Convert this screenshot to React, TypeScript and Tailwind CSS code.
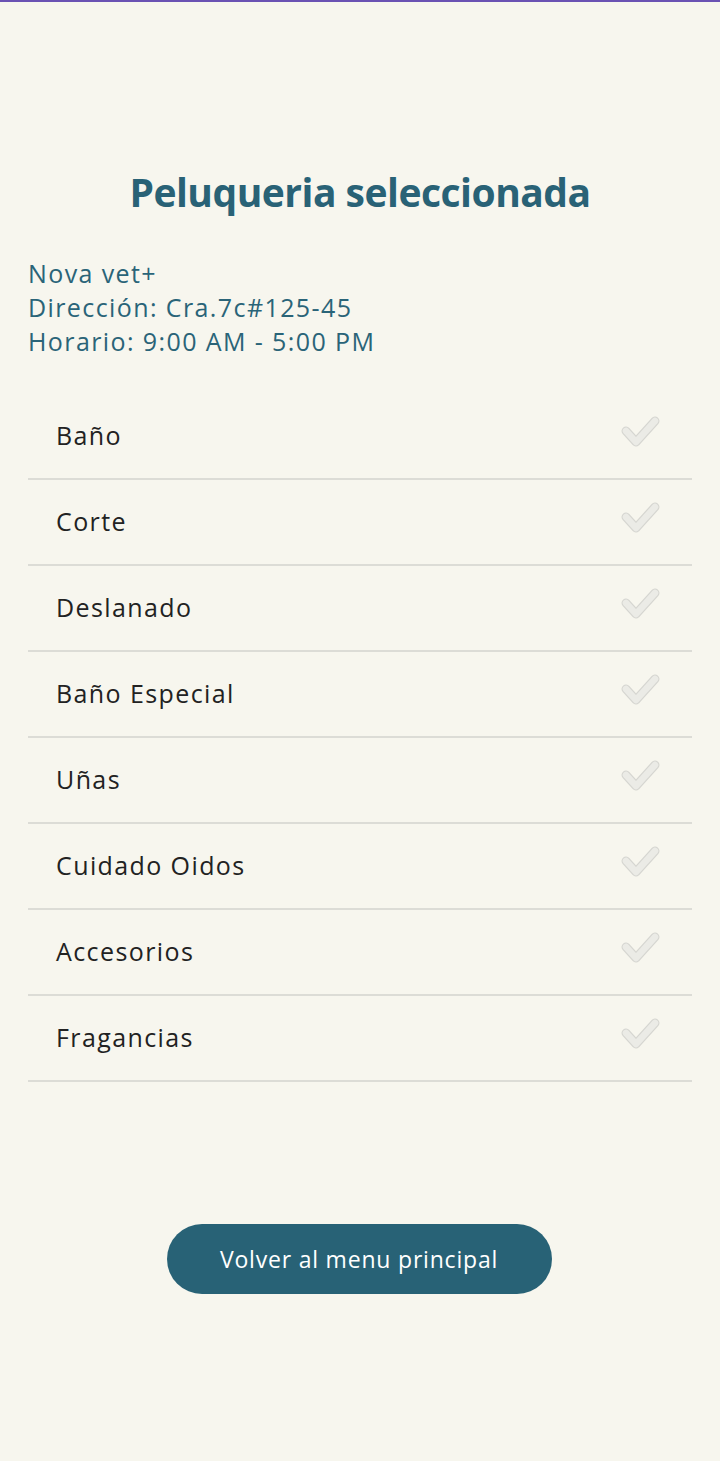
const services = [
  "Baño",
  "Corte",
  "Deslanado",
  "Baño Especial",
  "Uñas",
  "Cuidado Oidos",
  "Accesorios",
  "Fragancias",
];

function CheckIcon() {
  return (
    <svg width="44" height="40" viewBox="0 0 44 40" fill="none">
      <polyline
        points="6,15 16,26 35,5"
        stroke="#d6d6d1"
        strokeWidth="9"
        strokeLinecap="round"
        strokeLinejoin="round"
      />
      <polyline
        points="6,15 16,26 35,5"
        stroke="#ebebe6"
        strokeWidth="6.5"
        strokeLinecap="round"
        strokeLinejoin="round"
      />
    </svg>
  );
}

export default function App() {
  return (
    <div
      className="min-h-[1461px] bg-[#f7f6ee] border-t-[2px] border-[#6a52b3] flex flex-col"
      style={{ fontFamily: '"Open Sans", "Liberation Sans", sans-serif' }}
    >
      <main className="px-7 pt-[166px] flex flex-col">
        {/* Title */}
        <h1 className="text-center text-[39px] leading-[48px] font-bold text-[#296276] tracking-[-0.5px]">
          Peluqueria seleccionada
        </h1>

        {/* Info */}
        <div className="mt-[40px] text-[25px] leading-[34px] text-[#2a6478] tracking-[1.4px]">
          <p>Nova vet+</p>
          <p>Dirección: Cra.7c#125-45</p>
          <p>Horario: 9:00 AM - 5:00 PM</p>
        </div>

        {/* Services */}
        <ul className="mt-[36px]">
          {services.map((s) => (
            <li
              key={s}
              className="h-[86px] flex items-center justify-between pl-7 pr-[28px] border-b-2 border-[#dcdcd6]"
            >
              <span className="text-[25px] text-[#222222] tracking-[1.4px]">{s}</span>
              <CheckIcon />
            </li>
          ))}
        </ul>

        {/* Back button */}
        <div className="flex justify-center mt-[142px]">
          <button className="w-[385px] h-[70px] rounded-full bg-[#286276] text-white text-[23px] tracking-[0.8px] -translate-x-px">
            Volver al menu principal
          </button>
        </div>
      </main>
    </div>
  );
}
